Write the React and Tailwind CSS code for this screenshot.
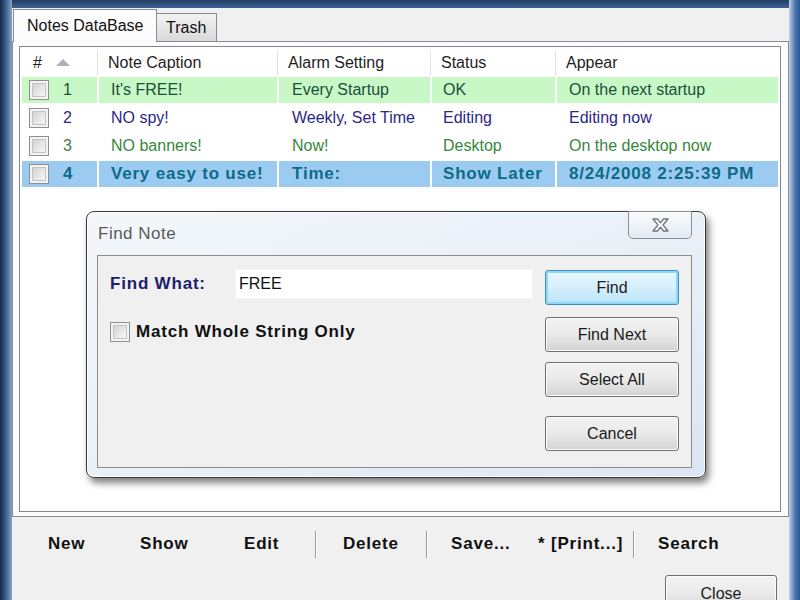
import React from 'react';

const notes = [
  { id: 1, caption: "It's FREE!", alarm: 'Every Startup', status: 'OK', appear: 'On the next startup', bg: 'bg-[#c8f8c6]', text: 'text-[#18503a]', bold: false },
  { id: 2, caption: 'NO spy!', alarm: 'Weekly, Set Time', status: 'Editing', appear: 'Editing now', bg: 'bg-white', text: 'text-[#2c2886]', bold: false },
  { id: 3, caption: 'NO banners!', alarm: 'Now!', status: 'Desktop', appear: 'On the desktop now', bg: 'bg-white', text: 'text-[#36873b]', bold: false },
  { id: 4, caption: 'Very easy to use!', alarm: 'Time:', status: 'Show Later', appear: '8/24/2008 2:25:39 PM', bg: 'bg-[#9ccbf1]', text: 'text-[#0d6b88]', bold: true },
];

const Check = () => (
  <div className="w-[20px] h-[20px] border border-[#8e8f8f] bg-[#f4f4f4] p-[2px] shrink-0">
    <div className="w-full h-full border border-[#c4c4c4] bg-gradient-to-br from-[#d2d2d2] to-[#f8f8f8]" />
  </div>
);

const WinButton = ({ children, active }) => (
  <div
    className={
      active
        ? 'h-[35px] w-full flex items-center justify-center rounded-[3px] border border-[#3d8fc4] shadow-[inset_0_0_0_2px_#8cd7f5] bg-gradient-to-b from-[#eaf7fd] via-[#d4effc] to-[#b9e3f8] text-[16px] text-[#1a1a1a]'
        : 'h-[35px] w-full flex items-center justify-center rounded-[3px] border border-[#707070] shadow-[inset_0_0_0_1px_#fbfbfb] bg-gradient-to-b from-[#f3f3f3] via-[#e9e9e9] to-[#d3d3d3] text-[16px] text-[#1a1a1a]'
    }
  >
    {children}
  </div>
);

const Sep = () => <div className="w-[2px] h-[27px] border-l border-[#9a9a9a] bg-white shrink-0" />;

export default function App() {
  const bold = 'font-bold text-[17px] tracking-[0.8px]';

  return (
    <div className="relative w-[800px] h-[600px] overflow-hidden flex font-['Liberation_Sans',Arial,sans-serif] bg-[#2c4a74]">
      {/* window frame left */}
      <div className="w-[12px] h-full bg-gradient-to-r from-[#172a47] via-[#3a5f90] to-[#8aa4c6] shrink-0" />

      <div className="flex-1 flex flex-col">
        <div className="h-[8px] bg-gradient-to-b from-[#253f66] to-[#3f6293] shrink-0" />

        <div className="flex-1 bg-[#f0f0f0] flex flex-col">
          {/* tabs */}
          <div className="h-[33px] flex items-end pl-[1px] shrink-0">
            <div className="relative z-10 h-[33px] w-[144px] -mb-px bg-[#fcfcfc] border border-b-0 border-[#898c95] flex items-center pl-[13px] text-[16px] text-[#111]">
              Notes DataBase
            </div>
            <div className="h-[28px] w-[60px] border border-b-0 border-l-0 border-[#898c95] bg-gradient-to-b from-[#f3f3f3] to-[#d9d9d9] flex items-center pl-[9px] text-[16px] text-[#111]">
              Trash
            </div>
          </div>

          {/* tab panel */}
          <div className="h-[476px] border border-[#898c95] bg-[#fcfcfc] pt-[4px] pl-[6px] pr-[7px] pb-[4px] shrink-0">
            <div className="h-full border border-[#828790] bg-white flex flex-col">
              {/* header */}
              <div className="h-[29px] flex pt-[3px] text-[16px] text-[#1e1e1e] shrink-0">
                <div className="w-[78px] border-r border-[#e3e3e3] flex items-center pl-[13px] gap-[14px]">
                  <span>#</span>
                  <svg width="14" height="8" viewBox="0 0 14 8">
                    <polygon points="7,0 14,7 0,7" fill="#a9b1ba" />
                  </svg>
                </div>
                <div className="w-[180px] border-r border-[#e3e3e3] flex items-center pl-[10px]">Note Caption</div>
                <div className="w-[153px] border-r border-[#e3e3e3] flex items-center pl-[10px]">Alarm Setting</div>
                <div className="w-[125px] border-r border-[#e3e3e3] flex items-center pl-[10px]">Status</div>
                <div className="flex-1 flex items-center pl-[10px]">Appear</div>
              </div>

              {/* rows */}
              <div className="mt-[1px] px-[2px] flex flex-col gap-[2px]">
                {notes.map((n) => (
                  <div
                    key={n.id}
                    className={`h-[26px] flex gap-[2px] ${n.text} ${n.bold ? bold : 'text-[16px]'}`}
                  >
                    <div className={`w-[75px] flex items-center pl-[7px] gap-[14px] ${n.bg}`}>
                      <Check />
                      <span>{n.id}</span>
                    </div>
                    <div className={`w-[178px] flex items-center pl-[12px] whitespace-nowrap ${n.bg}`}>{n.caption}</div>
                    <div className={`w-[151px] flex items-center pl-[13px] whitespace-nowrap ${n.bg}`}>{n.alarm}</div>
                    <div className={`w-[123px] flex items-center pl-[11px] whitespace-nowrap ${n.bg}`}>{n.status}</div>
                    <div className={`flex-1 flex items-center pl-[12px] whitespace-nowrap ${n.bg}`}>{n.appear}</div>
                  </div>
                ))}
              </div>
            </div>
          </div>

          {/* toolbar */}
          <div className={`h-[54px] flex items-center pl-[36px] text-[#111] shrink-0 ${bold}`}>
            <div className="w-[92px]">New</div>
            <div className="w-[104px]">Show</div>
            <div className="w-[71px]">Edit</div>
            <Sep />
            <div className="w-[83px] pl-[26px] box-content">Delete</div>
            <Sep />
            <div className="w-[87px] ml-[23px]">Save...</div>
            <div className="w-[95px]">* [Print...]</div>
            <Sep />
            <div className="ml-[23px]">Search</div>
          </div>

          <div className="flex justify-end pr-[12px] mt-[4px]">
            <div className="w-[112px] h-[38px] rounded-[3px] border border-[#707070] shadow-[inset_0_0_0_1px_#fbfbfb] bg-gradient-to-b from-[#f3f3f3] via-[#e9e9e9] to-[#d3d3d3] flex items-center justify-center text-[16px] text-[#1a1a1a]">
              Close
            </div>
          </div>
        </div>
      </div>

      {/* window frame right */}
      <div className="w-[11px] h-full bg-gradient-to-r from-[#c9d3de] via-[#4f7bb6] to-[#2d5590] shrink-0" />

      {/* Find Note dialog */}
      <div className="absolute left-[86px] top-[211px] w-[620px] h-[267px] rounded-[8px] border border-[#3a3a3a] bg-gradient-to-br from-[#f3f7fb] via-[#e9f0f8] to-[#dce7f3] shadow-[3px_5px_7px_rgba(0,0,0,0.5),inset_0_0_0_1px_#ffffff] flex flex-col">
        <div className="h-[43px] flex pl-[11px] pr-[13px] shrink-0">
          <div className="flex-1 self-center text-[17px] tracking-[0.5px] text-[#5a5a5a]">Find Note</div>
          <div className="w-[64px] h-[28px] -mt-px border border-[#8a8f96] rounded-b-[5px] bg-gradient-to-b from-[#f9fbfd] to-[#e4ebf3] flex items-center justify-center">
            <svg width="17" height="14" viewBox="0 0 17 14">
              <polygon
                points="1,1 5.5,1 8.5,4.8 11.5,1 16,1 11,7 16,13 11.5,13 8.5,9.2 5.5,13 1,13 6,7"
                fill="#ffffff"
                stroke="#6f747a"
                strokeWidth="1.3"
                strokeLinejoin="round"
              />
            </svg>
          </div>
        </div>

        <div className="ml-[10px] mr-[13px] h-[213px] border border-[#8c8c8c] bg-[#f0f0f0] flex">
          <div className="flex-1 pl-[12px] pt-[13px]">
            <div className="flex items-center">
              <div className={`w-[125px] text-[#1d1f6e] ${bold}`}>Find What:</div>
              <div className="w-[298px] h-[30px] bg-white border border-[#f4f4f4] flex items-center pl-[3px] text-[16px] text-[#111]">
                FREE
              </div>
            </div>
            <div className="flex items-center gap-[6px] mt-[20px]">
              <Check />
              <span className={`text-[#111] ${bold}`}>Match Whole String Only</span>
            </div>
          </div>

          <div className="w-[134px] mr-[12px] pt-[14px] flex flex-col">
            <WinButton active>Find</WinButton>
            <div className="mt-[12px]">
              <WinButton>Find Next</WinButton>
            </div>
            <div className="mt-[10px]">
              <WinButton>Select All</WinButton>
            </div>
            <div className="mt-[19px]">
              <WinButton>Cancel</WinButton>
            </div>
          </div>
        </div>
      </div>
    </div>
  );
}
